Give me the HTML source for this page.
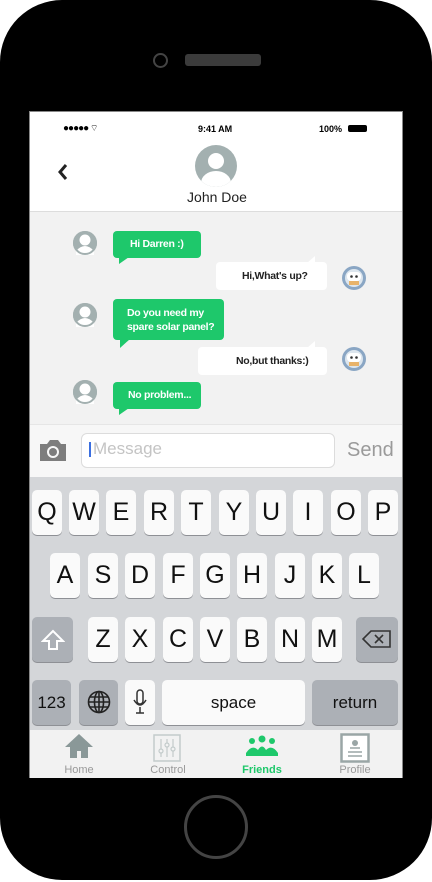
<!DOCTYPE html>
<html><head><meta charset="utf-8"><style>
*{margin:0;padding:0;box-sizing:border-box}
body{width:432px;height:882px;background:#fff;position:relative;overflow:hidden;font-family:"Liberation Sans",sans-serif}
.a{position:absolute}
.phone{left:0;top:0;width:432px;height:880px;background:#000;border-radius:62px}
.screen{left:29px;top:111px;width:374px;height:667px;background:#f2f2f2;border:1px solid #888;overflow:hidden}
.k{position:absolute;background:#fafafa;border-radius:5px;box-shadow:0 1px 0 #8e9095;font-size:25px;color:#111;text-align:center;line-height:45px;width:30px;height:45px}
.g{background:#acb0b6}
.bub{position:absolute;font-size:10.5px;font-weight:bold;border-radius:4px;white-space:nowrap;letter-spacing:-0.3px}
.gr{background:#1ec86b;color:#fff}
.wh{background:#fff;color:#222}
.tab{position:absolute;top:764px;font-size:11px;color:#999;text-align:center;width:80px}
</style></head><body>
<div class="a phone"></div>
<div class="a" style="left:153px;top:53px;width:15px;height:15px;border:2px solid #444;border-radius:50%"></div>
<div class="a" style="left:185px;top:54px;width:76px;height:12px;background:#3b3b3b;border-radius:3px"></div>
<div class="a" style="left:184px;top:795px;width:64px;height:64px;border:3px solid #444;border-radius:50%"></div>

<div class="a screen">
 <div class="a" style="left:0;top:0;width:374px;height:100px;background:#fff;border-bottom:1px solid #ddd"></div>
 <div class="a" style="left:33px;top:11px;font-size:10px;letter-spacing:-1px">●●●●● <span style="font-size:9px">⌔</span></div>
 <div class="a" style="left:168px;top:12px;font-size:9px;font-weight:bold">9:41 AM</div>
 <div class="a" style="left:289px;top:12px;font-size:9px;font-weight:bold">100%</div>
 <div class="a" style="left:318px;top:13px;width:19px;height:7px;background:#000;border-radius:2px"></div>
 <svg class="a" style="left:26px;top:50px" width="14" height="20"><path d="M10 3L4 10L10 17" stroke="#222" stroke-width="3" fill="none"/></svg>
 <svg class="a" style="left:165px;top:33px" width="42" height="42"><clipPath id="c"><circle cx="21" cy="21" r="21"/></clipPath><circle cx="21" cy="21" r="21" fill="#a3b0b0"/><g clip-path="url(#c)" fill="#fff"><circle cx="21" cy="16" r="8"/><ellipse cx="21" cy="38" rx="15" ry="12"/></g></svg>
 <div class="a" style="left:0;width:374px;top:77px;text-align:center;font-size:14px;color:#222">John Doe</div>

 <svg width="0" height="0"><defs><g id="av"><circle cx="12" cy="12" r="12" fill="#a3b0b0"/><circle cx="12" cy="9" r="5.5" fill="#fff"/><path d="M3 20Q12 10 21 20L21 24L3 24Z" fill="#fff"/><circle cx="12" cy="12" r="11" fill="none" stroke="#a3b0b0" stroke-width="2"/></g>
 <g id="rb"><circle cx="12" cy="12" r="12" fill="#8aa6c4"/><circle cx="12" cy="12" r="9" fill="#dde6ee"/><rect x="5" y="6" width="14" height="9" rx="4" fill="#fff"/><circle cx="9.5" cy="10.5" r="1.3" fill="#333"/><circle cx="14.5" cy="10.5" r="1.3" fill="#333"/><path d="M7 15h10v4h-10z" fill="#e8b36a"/></g></defs></svg>
 <svg class="a" style="left:43px;top:119px" width="24" height="24"><use href="#av"/></svg>
 <svg class="a" style="left:43px;top:191px" width="24" height="24"><use href="#av"/></svg>
 <svg class="a" style="left:43px;top:268px" width="24" height="24"><use href="#av"/></svg>
 <svg class="a" style="left:312px;top:154px" width="24" height="24"><use href="#rb"/></svg>
 <svg class="a" style="left:312px;top:235px" width="24" height="24"><use href="#rb"/></svg>

 <div class="bub gr" style="left:83px;top:119px;width:88px;height:27px;line-height:27px;padding-left:17px">Hi Darren :)</div>
 <svg class="a" style="left:89px;top:145px" width="10" height="8"><path d="M0 0H10L0 7Z" fill="#1ec86b"/></svg>
 <div class="bub wh" style="left:186px;top:150px;width:111px;height:28px;line-height:28px;padding-left:26px">Hi,What's up?</div>
 <svg class="a" style="left:277px;top:144px" width="8" height="7"><path d="M0 7H8V0Z" fill="#fff"/></svg>
 <div class="bub gr" style="left:83px;top:187px;width:111px;height:41px;padding:7px 0 0 14px;line-height:14px">Do you need my<br>spare solar panel?</div>
 <svg class="a" style="left:90px;top:227px" width="10" height="9"><path d="M0 0H10L0 9Z" fill="#1ec86b"/></svg>
 <div class="bub wh" style="left:168px;top:235px;width:129px;height:28px;line-height:28px;padding-left:38px">No,but thanks:)</div>
 <svg class="a" style="left:277px;top:229px" width="8" height="7"><path d="M0 7H8V0Z" fill="#fff"/></svg>
 <div class="bub gr" style="left:83px;top:270px;width:88px;height:27px;line-height:27px;padding-left:15px">No problem...</div>
 <svg class="a" style="left:89px;top:296px" width="10" height="8"><path d="M0 0H10L0 7Z" fill="#1ec86b"/></svg>

 <div class="a" style="left:0;top:312px;width:374px;height:53px;background:#f7f7f7;border-top:1px solid #e6e6e6"></div>
 <svg class="a" style="left:8px;top:327px" width="30" height="23"><path d="M2 5h7l3-4h8l3 4h5v17H2z" fill="#7d7d7d"/><circle cx="15" cy="13" r="6" fill="#f7f7f7"/><circle cx="15" cy="13" r="4" fill="#7d7d7d"/></svg>
 <div class="a" style="left:51px;top:321px;width:254px;height:35px;background:#fff;border:1px solid #dcdcdc;border-radius:6px"></div>
 <div class="a" style="left:59px;top:330px;width:2px;height:15px;background:#3b6fe0"></div>
 <div class="a" style="left:63px;top:327px;font-size:17px;color:#c4c4c4">Message</div>
 <div class="a" style="left:317px;top:327px;font-size:20px;color:#9a9a9a">Send</div>

 <div class="a" style="left:0;top:365px;width:374px;height:254px;background:#d4d6d9"></div>
</div>
<div class="k" style="left:32px;top:490px">Q</div><div class="k" style="left:69px;top:490px">W</div><div class="k" style="left:106px;top:490px">E</div><div class="k" style="left:144px;top:490px">R</div><div class="k" style="left:181px;top:490px">T</div><div class="k" style="left:219px;top:490px">Y</div><div class="k" style="left:256px;top:490px">U</div><div class="k" style="left:293px;top:490px">I</div><div class="k" style="left:331px;top:490px">O</div><div class="k" style="left:368px;top:490px">P</div>
<div class="k" style="left:50px;top:553px">A</div><div class="k" style="left:88px;top:553px">S</div><div class="k" style="left:125px;top:553px">D</div><div class="k" style="left:163px;top:553px">F</div><div class="k" style="left:200px;top:553px">G</div><div class="k" style="left:237px;top:553px">H</div><div class="k" style="left:275px;top:553px">J</div><div class="k" style="left:312px;top:553px">K</div><div class="k" style="left:349px;top:553px">L</div>
<div class="k g" style="left:32px;top:617px;width:41px"><svg width="24" height="22" style="margin-top:12px"><path d="M12 2L2 12h6v8h8v-8h6z" fill="none" stroke="#fff" stroke-width="2"/></svg></div>
<div class="k" style="left:88px;top:617px">Z</div><div class="k" style="left:125px;top:617px">X</div><div class="k" style="left:163px;top:617px">C</div><div class="k" style="left:200px;top:617px">V</div><div class="k" style="left:237px;top:617px">B</div><div class="k" style="left:275px;top:617px">N</div><div class="k" style="left:312px;top:617px">M</div>
<div class="k g" style="left:356px;top:617px;width:42px"><svg width="30" height="18" style="margin-top:13px"><path d="M9 1h19v16H9L1 9z" fill="none" stroke="#333" stroke-width="1.6"/><path d="M13 5l8 8M21 5l-8 8" stroke="#333" stroke-width="1.6"/></svg></div>
<div class="k g" style="left:32px;top:680px;width:39px;font-size:17px">123</div>
<div class="k g" style="left:79px;top:680px;width:39px"><svg width="24" height="24" style="margin-top:10px"><g fill="none" stroke="#222" stroke-width="1.6"><circle cx="12" cy="12" r="10.5"/><ellipse cx="12" cy="12" rx="4.5" ry="10.5"/><path d="M12 1.5v21M1.5 12h21M3 7h18M3 17h18"/></g></svg></div>
<div class="k" style="left:125px;top:680px"><svg width="14" height="26" style="margin-top:9px"><rect x="4" y="1" width="6" height="14" rx="3" fill="none" stroke="#333" stroke-width="1.5"/><path d="M1 11q6 10 12 0M7 18v6M3 24h8" fill="none" stroke="#333" stroke-width="1.5"/></svg></div>
<div class="k" style="left:162px;top:680px;width:143px;font-size:17px">space</div>
<div class="k g" style="left:312px;top:680px;width:86px;font-size:17px">return</div>

<div class="a" style="left:30px;top:730px;width:372px;height:48px;background:#f2f2f2"></div>
<svg class="a" style="left:64px;top:733px" width="30" height="26"><path d="M15 1L1 14h5v11h7v-7h4v7h7V14h5z" fill="#8a9898"/></svg>
<svg class="a" style="left:153px;top:734px" width="28" height="28"><rect x="1" y="1" width="26" height="26" fill="none" stroke="#c3cbcb" stroke-width="1.5"/><g stroke="#c3cbcb" stroke-width="1.2" fill="none"><path d="M8 5v18M14 5v18M20 5v18"/><circle cx="8" cy="17" r="2" fill="#f2f2f2"/><circle cx="14" cy="11" r="2" fill="#f2f2f2"/><circle cx="20" cy="15" r="2" fill="#f2f2f2"/></g></svg>
<svg class="a" style="left:246px;top:735px" width="32" height="22" fill="#1ec86b"><circle cx="6" cy="6" r="3"/><circle cx="16" cy="4" r="3.5"/><circle cx="26" cy="6" r="3"/><path d="M0 18q6-9 12-3q4-7 8 0q6-6 12 3v3H0z"/></svg>
<svg class="a" style="left:340px;top:733px" width="30" height="30"><rect x="1.5" y="1.5" width="27" height="27" fill="#fff" stroke="#9aa6a6" stroke-width="2.5"/><circle cx="15" cy="10" r="3" fill="#9aa6a6"/><path d="M10 15h10M8 19h14M8 23h14" stroke="#9aa6a6" stroke-width="1.5"/></svg>
<div class="tab" style="left:39px">Home</div>
<div class="tab" style="left:128px">Control</div>
<div class="tab" style="left:222px;color:#1ec86b;font-weight:bold">Friends</div>
<div class="tab" style="left:315px">Profile</div>
</body></html>
